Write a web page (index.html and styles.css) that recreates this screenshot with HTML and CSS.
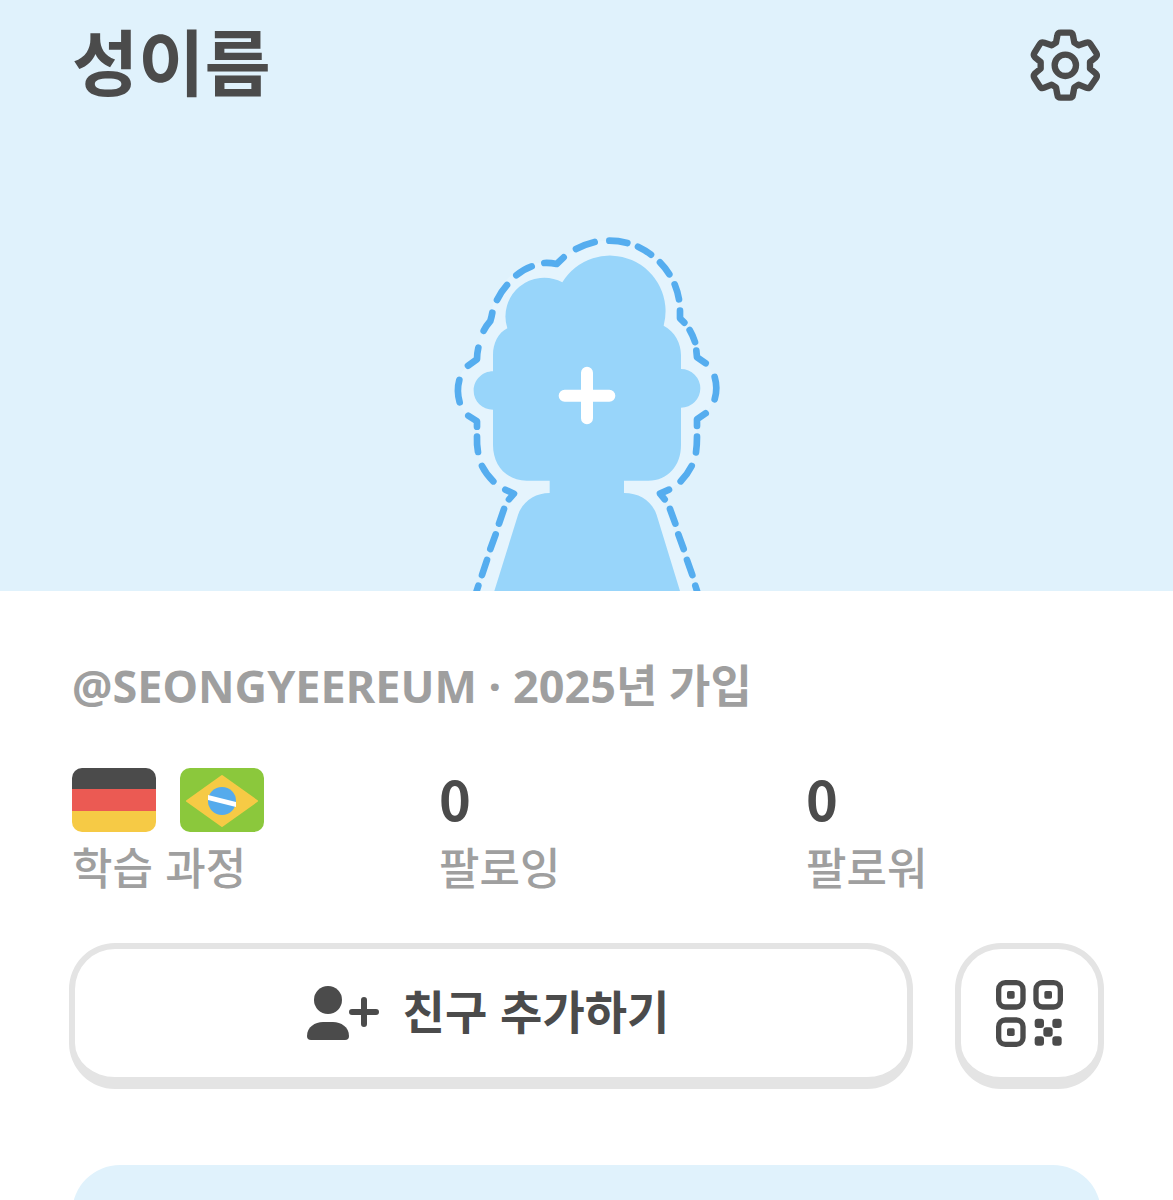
FILE: index.html
```html
<!DOCTYPE html>
<html lang="ko">
<head>
  <meta charset="UTF-8" />
  <meta name="viewport" content="width=device-width, initial-scale=1" />
  <title>성이름</title>
  <link rel="stylesheet" href="styles.css">
</head>
<body>
  <div class="page">
    <header class="hero">
      <div class="topbar">
        <h1>성이름</h1>
        <button class="icon-btn" type="button" aria-label="설정">
          <svg class="gear" viewBox="58 58 216 216" fill="none" stroke="currentColor" stroke-width="19" stroke-linejoin="round">
            <path d="M153 69H180Q189 69 190 78L194 99L207 107L229 99Q238 96 243 104L260 130Q264 137 258 143L241 157V177L258 191Q264 198 260 205L243 230Q238 238 229 234L207 225L194 233L190 255Q189 264 180 264H153Q144 264 143 255L139 233L126 225L104 234Q95 238 90 230L74 205Q70 198 76 191L93 177V157L76 143Q70 137 74 130L90 104Q95 96 104 99L126 107L139 99L143 78Q144 69 153 69Z"/>
            <circle cx="167" cy="167" r="32"/>
          </svg>
        </button>
      </div>
      <button class="avatar" type="button" aria-label="아바타 만들기">
        <svg viewBox="-9 0 900 1113" fill="none" stroke-linecap="round" stroke-linejoin="round">
          <path class="avatar-halo" d="M350 132C395 85 450 62 508 62C625 64 720 160 720 295C748 325 768 365 771 412C842 440 842 570 771 598V660C770 730 740 790 660 821L772 1125H110L222 821C142 790 111 730 111 660V604C32 570 32 450 111 418C113 370 125 335 151 303C160 180 250 110 350 132Z"/>
          <path class="avatar-body" d="M367 187A167 167 0 0 1 671 317C705 335 723 370 723 405V447A58 58 0 0 1 723 563V675C723 737 684 782 625 782H552V819C600 819 637 845 650 885L720 1113H163L234 885C247 845 285 819 329 819V782H260C200 782 159 737 159 675V569C127 569 101 544 101 512C101 480 127 454 159 454V405C159 370 175 338 202 325A116 116 0 0 1 367 187Z"/>
          <g class="avatar-dashes">
            <path d="M508 62Q535 62 562 69"/>
            <path d="M594 80Q615 90 633 104"/>
            <path d="M660 127Q676 143 688 163"/>
            <path d="M704 193Q713 215 717 238"/>
            <path d="M720 272V295L733 308"/>
            <path d="M749 330Q758 345 765 366"/>
            <path d="M769 392L771 412L797 430"/>
            <path d="M824 471Q834 505 824 538"/>
            <path d="M797 580L771 598V618"/>
            <path d="M771 650Q771 675 768 697"/>
            <path d="M755 738Q743 762 722 784"/>
            <path d="M687 809L660 821L674 838"/>
            <path d="M690 867L706 911"/>
            <path d="M715 943L731 987"/>
            <path d="M741 1020L757 1065"/>
            <path d="M766 1097L772 1116"/>
            <path d="M464 66Q435 73 408 87"/>
            <path d="M371 112L350 132Q330 128 313 129"/>
            <path d="M275 139Q250 148 229 166"/>
            <path d="M201 195Q183 215 171 240"/>
            <path d="M157 278Q155 290 151 303Q138 318 131 332"/>
            <path d="M115 383Q111 400 111 418L84 437"/>
            <path d="M58 480Q49 512 59 547"/>
            <path d="M85 587L111 604V620"/>
            <path d="M111 650Q110 675 114 696"/>
            <path d="M126 738Q138 762 160 784"/>
            <path d="M196 809L222 821L207 838"/>
            <path d="M192 867L177 911"/>
            <path d="M167 943L151 987"/>
            <path d="M141 1020L126 1065"/>
            <path d="M115 1097L109 1116"/>
          </g>
          <path class="avatar-plus" d="M441 458V595M374 527H508"/>
        </svg>
      </button>
    </header>

    <main>
      <p class="handle">@SEONGYEEREUM · 2025년 가입</p>

      <div class="stats">
        <div class="stat">
          <div class="flags">
            <svg class="flag" viewBox="0 0 84 64" role="img" aria-label="독일어">
              <rect width="84" height="22" fill="#4b4b4b"/>
              <rect y="21" width="84" height="22" fill="#eb5a53"/>
              <rect y="43" width="84" height="21" fill="#f6ca45"/>
            </svg>
            <svg class="flag" viewBox="0 0 84 64" role="img" aria-label="포르투갈어">
              <rect width="84" height="64" fill="#8bc83c"/>
              <path d="M7 33L42 8L77 33L42 58Z" fill="#f6ca45" stroke="#f6ca45" stroke-width="2" stroke-linejoin="round"/>
              <circle cx="42" cy="33" r="14" fill="#55abec"/>
              <path d="M28 27L56 34V39L28 32Z" fill="#fff"/>
            </svg>
          </div>
          <span class="label">학습 과정</span>
        </div>
        <a class="stat" href="#following">
          <span class="count">0</span>
          <span class="label">팔로잉</span>
        </a>
        <a class="stat" href="#followers">
          <span class="count">0</span>
          <span class="label">팔로워</span>
        </a>
      </div>

      <div class="actions">
        <button class="btn add-friend" type="button">
          <svg class="person" viewBox="0 0 72 54" fill="currentColor">
            <circle cx="21" cy="14" r="14"/>
            <path d="M0 50C0 41 8 36 16 36H26C34 36 42 41 42 50Q42 54 38 54H4Q0 54 0 50Z"/>
            <path d="M57 14V38M45 26H69" stroke="currentColor" stroke-width="6" stroke-linecap="round"/>
          </svg>
          <span class="btn-text">친구 추가하기</span>
        </button>
        <button class="btn qr" type="button" aria-label="QR 코드">
          <svg viewBox="0 0 201 201" fill="currentColor">
            <g fill="none" stroke="currentColor" stroke-width="16">
              <rect x="8" y="8" width="73" height="73" rx="20"/>
              <rect x="120" y="8" width="73" height="73" rx="20"/>
              <rect x="8" y="120" width="73" height="73" rx="20"/>
            </g>
            <rect x="33" y="33" width="23" height="23" rx="5"/>
            <rect x="145" y="33" width="23" height="23" rx="5"/>
            <rect x="33" y="145" width="23" height="23" rx="5"/>
            <rect x="116" y="116" width="28" height="28" rx="9"/>
            <rect x="169" y="116" width="28" height="28" rx="9"/>
            <rect x="142" y="142" width="28" height="28" rx="9"/>
            <rect x="116" y="169" width="28" height="28" rx="9"/>
            <rect x="169" y="169" width="28" height="28" rx="9"/>
          </svg>
        </button>
      </div>

      <section class="card"></section>
    </main>
  </div>
</body>
</html>
```
FILE: styles.css
```css
* { box-sizing: border-box; }
body { margin: 0; background: #fff; color: #4b4b4b; font-family: "Noto Sans CJK KR", sans-serif; }
h1, p { margin: 0; }
button { padding: 0; border: 0; background: none; color: inherit; font: inherit; cursor: pointer; }
a { color: inherit; text-decoration: none; }
svg { display: block; }

.page { height: 100vh; overflow-y: auto; scrollbar-width: none; }

.hero { display: flex; flex-direction: column; align-items: center; background: #e0f2fc; }
.topbar { display: flex; align-items: center; justify-content: space-between; width: 100%; height: 220px; padding: 0 72px 90px; }
.topbar h1 { padding-bottom: 12px; font-size: 72px; line-height: 72px; font-weight: 700; }
.gear { width: 72px; height: 72px; }

.avatar svg { width: 300px; height: 371px; }
.avatar-halo { fill: #e5f4fd; }
.avatar-body { fill: #98d5fa; }
.avatar-dashes { stroke: #55adef; stroke-width: 20; }
.avatar-plus { stroke: #fff; stroke-width: 36; }

.handle { padding: 63px 72px 0; font-family: "Noto Sans", "Noto Sans CJK KR", sans-serif; font-size: 45px; line-height: 64px; font-weight: 700; color: #9f9f9f; }

.stats { display: grid; grid-template-columns: repeat(3, 1fr); gap: 72px; padding: 50px 72px 0; }
.stat { display: flex; flex-direction: column; }
.flags { display: flex; gap: 24px; }
.flag { width: 84px; height: 64px; border-radius: 10px; }
.count { font-size: 54px; line-height: 60px; height: 64px; font-weight: 700; }
.label { font-size: 44px; line-height: 68px; font-weight: 500; color: #9f9f9f; }

.actions { display: flex; gap: 42px; padding: 43px 69px 0; }
.btn { display: flex; align-items: center; justify-content: center; gap: 24px; height: 146px; border: 6px solid #e4e4e4; border-bottom-width: 12px; border-radius: 46px; }
.add-friend { flex: 1; padding-right: 6px; font-size: 46px; font-weight: 700; }
.btn-text { padding-bottom: 8px; }
.person { width: 72px; height: 54px; }
.qr { width: 149px; }
.qr svg { width: 67px; height: 67px; }

.card { height: 240px; margin: 76px 72px 0; border-radius: 48px 48px 0 0; background: #e0f2fc; }
```
